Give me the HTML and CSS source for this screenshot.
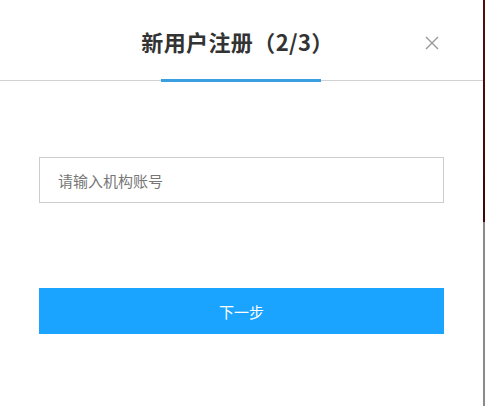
FILE: index.html
```html
<!DOCTYPE html>
<html lang="zh-CN">
<head>
  <meta charset="UTF-8" />
  <title>新用户注册</title>
  <link rel="stylesheet" href="styles.css">
</head>
<body>
<div class="page">
  <div class="modal">
    <div class="modal-header">
      <h2 class="modal-title">新用户注册（2/3）</h2>
      <span class="tab-line"></span>
      <button class="close-btn" aria-label="关闭">
        <svg width="14" height="14" viewBox="0 0 14 14">
          <path d="M1 1L13 13M13 1L1 13" stroke="#999" stroke-width="1.4" fill="none"/>
        </svg>
      </button>
    </div>
    <div class="modal-body">
      <input class="text-input" type="text" placeholder="请输入机构账号" />
      <button class="next-button">下一步</button>
    </div>
  </div>
  <div class="side-bar"></div>
</div>
</body>
</html>
```

FILE: styles.css
```css
html, body {
  margin: 0;
  padding: 0;
  background: #fff;
  font-family: "Noto Sans CJK SC", "Liberation Sans", sans-serif;
}
.page {
  display: flex;
  width: 485px;
  height: 406px;
}
.modal {
  flex: 1;
  background: #fff;
}
.modal-header {
  position: relative;
  height: 80px;
  border-bottom: 1px solid #d2d2d2;
  display: flex;
  align-items: center;
  justify-content: center;
}
.modal-title {
  margin: 2px 0 0 -8px;
  font-size: 22px;
  font-weight: bold;
  color: #333;
  letter-spacing: 0.4px;
}
.tab-line {
  position: absolute;
  left: 161px;
  bottom: -2px;
  width: 160px;
  height: 3px;
  background: #3a9fe0;
}
.close-btn {
  position: absolute;
  right: 44px;
  top: 36px;
  width: 14px;
  height: 14px;
  padding: 0;
  border: none;
  background: none;
  cursor: pointer;
  display: flex;
}
.modal-body {
  padding: 76px 39px 0 39px;
  display: flex;
  flex-direction: column;
}
.text-input {
  height: 46px;
  box-sizing: border-box;
  border: 1px solid #ccc;
  padding: 0 18px;
  font-family: inherit;
  font-size: 15px;
  color: #333;
  outline: none;
}
.text-input::placeholder {
  color: #777;
}
.next-button {
  margin-top: 85px;
  height: 46px;
  border: none;
  background: #1aa3ff;
  color: #fff;
  font-family: inherit;
  font-size: 15px;
  cursor: pointer;
}
.side-bar {
  width: 2px;
  background: linear-gradient(to bottom, #5a0c0c 0, #3a0808 222px, #8a8a8a 222px);
}
```
